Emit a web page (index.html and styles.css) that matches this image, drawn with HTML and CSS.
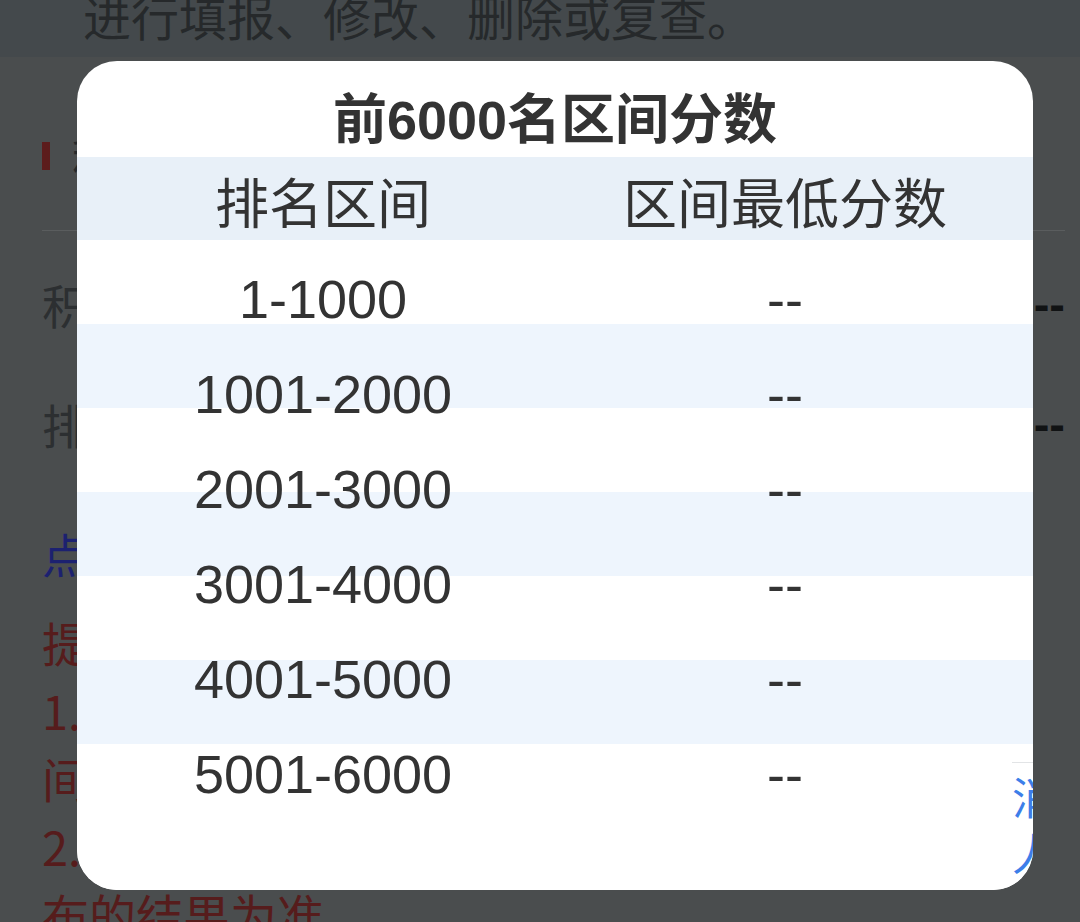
FILE: index.html
```html
<!DOCTYPE html>
<html lang="zh-CN">
<head>
<meta charset="utf-8">
<title>前6000名区间分数</title>
<link rel="stylesheet" href="styles.css">
</head>
<body>
  <div class="notice">
    <div class="notice-text">进行填报、修改、删除或复查。</div>
  </div>
  <div class="section">
    <div class="sec-title"><span class="bar"></span><span>积分排名</span></div>
    <div class="divider"></div>
    <div class="info-row info-row-a"><span>积分</span><span class="value">--</span></div>
    <div class="info-row info-row-b"><span>排名</span><span class="value">--</span></div>
    <div class="link">点击查看前6000名区间分数</div>
    <div class="tips">
      <div class="tip-line">提示：</div>
      <div class="tip-line">1. 排名区间分数为当前统计区</div>
      <div class="tip-line">间内的最低分数；</div>
      <div class="tip-line">2. 以上数据仅供参考，最终结果以官方公</div>
      <div class="tip-line">布的结果为准。</div>
    </div>
  </div>

  <div class="modal">
    <div class="modal-title">前6000名区间分数</div>
    <div class="table-head">
      <div class="cell">排名区间</div>
      <div class="cell">区间最低分数</div>
    </div>
    <div class="table-body">
      <div class="table-row"><div class="cell">1-1000</div><div class="cell">--</div></div>
      <div class="table-row"><div class="cell">1001-2000</div><div class="cell">--</div></div>
      <div class="table-row"><div class="cell">2001-3000</div><div class="cell">--</div></div>
      <div class="table-row"><div class="cell">3001-4000</div><div class="cell">--</div></div>
      <div class="table-row"><div class="cell">4001-5000</div><div class="cell">--</div></div>
      <div class="table-row"><div class="cell">5001-6000</div><div class="cell">--</div></div>
    </div>
    <div class="side-btn">消<br>人</div>
  </div>
</body>
</html>
```

FILE: styles.css
```css
* { box-sizing: border-box; }
html, body { margin: 0; padding: 0; }
body {
  width: 1080px;
  height: 922px;
  overflow: hidden;
  position: relative;
  background: #4a4d4e;
  font-family: "Liberation Sans", "Noto Sans CJK SC", sans-serif;
}

.notice {
  height: 57px;
  background: #44494c;
  padding-left: 83px;
  overflow: hidden;
}
.notice-text {
  margin-top: -13px;
  font-family: "Noto Sans CJK SC", sans-serif;
  font-size: 48px;
  line-height: 56px;
  color: #26292b;
  white-space: nowrap;
}

.section {
  padding: 0 15px 0 42px;
  font-family: "Noto Sans CJK SC", sans-serif;
  font-size: 47px;
}
.sec-title {
  margin-top: 73px;
  height: 52px;
  display: flex;
  align-items: center;
  gap: 22px;
  color: #26292b;
}
.bar {
  width: 8px;
  height: 28px;
  background: #5c1c1c;
}
.divider {
  margin-top: 48px;
  height: 1px;
  background: #5a5d5e;
}
.info-row {
  display: flex;
  justify-content: space-between;
  align-items: center;
  color: #2c2f31;
}
.info-row-a { height: 144px; }
.info-row-b { height: 96px; }
.value {
  font-family: "Liberation Sans", sans-serif;
  font-weight: bold;
  color: #111314;
}
.link {
  margin-top: 56px;
  line-height: 52px;
  color: #1c2170;
}
.tips {
  margin-top: 29px;
  color: #561c1c;
}
.tip-line {
  line-height: 68px;
  white-space: nowrap;
}

.modal {
  position: absolute;
  left: 77px;
  top: 61px;
  width: 956px;
  height: 829px;
  background: #fff;
  border-radius: 40px;
  overflow: hidden;
  color: #333;
}
.modal-title {
  height: 96px;
  padding-top: 26px;
  line-height: 66px;
  text-align: center;
  font-size: 54px;
  font-weight: bold;
}
.table-head {
  display: grid;
  grid-template-columns: 492px 432px;
  align-items: end;
  height: 83px;
  background: #e8f0f8;
  font-size: 54px;
  line-height: 70px;
}
.table-body {
  padding-top: 12px;
  height: 650px;
  background-color: #fff;
  background-image: repeating-linear-gradient(to bottom, #fff 0 84px, #eef5fd 84px 168px);
  background-size: 100% 504px;
  background-repeat: no-repeat;
}
.table-row {
  display: grid;
  grid-template-columns: 492px 432px;
  height: 95px;
  line-height: 95px;
  font-size: 54px;
}
.cell {
  text-align: center;
  white-space: nowrap;
}
.side-btn {
  position: absolute;
  left: 935px;
  top: 701px;
  width: 60px;
  border-top: 1px solid #e2e4e6;
  padding-top: 5px;
  font-family: "Noto Sans CJK SC", sans-serif;
  font-size: 44px;
  line-height: 56px;
  color: #3d7ee9;
}
```
